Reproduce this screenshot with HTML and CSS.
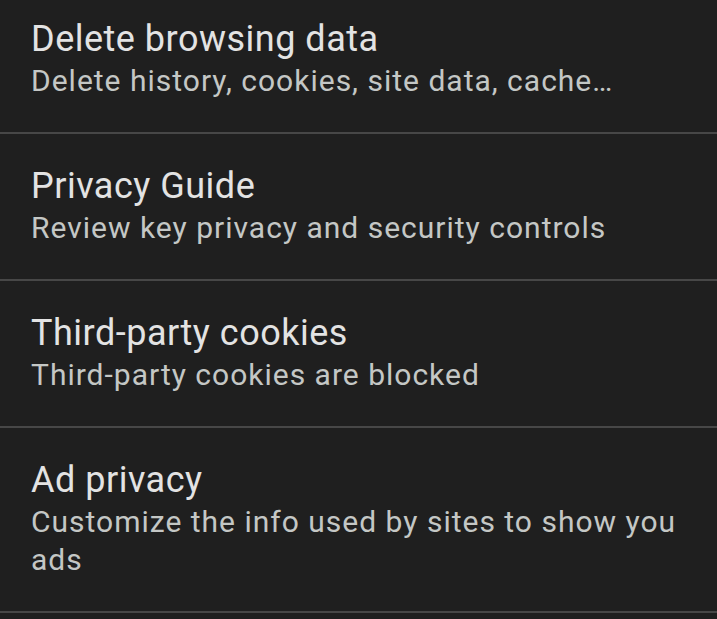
FILE: index.html
```html
<!DOCTYPE html>
<html lang="en">
<head>
    <meta charset="UTF-8">
    <title>Privacy and security</title>
    <link rel="stylesheet" href="styles.css">
</head>
<body>
    <ul class="prefs">
        <li class="pref">
            <div class="pref-title">Delete browsing data</div>
            <div class="pref-summary">Delete history, cookies, site data, cache…</div>
        </li>
        <li class="pref">
            <div class="pref-title">Privacy Guide</div>
            <div class="pref-summary">Review key privacy and security controls</div>
        </li>
        <li class="pref">
            <div class="pref-title">Third-party cookies</div>
            <div class="pref-summary">Third-party cookies are blocked</div>
        </li>
        <li class="pref">
            <div class="pref-title">Ad privacy</div>
            <div class="pref-summary">Customize the info used by sites to show you ads</div>
        </li>
    </ul>
</body>
</html>
```

FILE: styles.css
```css
* {
    margin: 0;
    padding: 0;
}

html,
body {
    background-color: #1f1f1f;
    height: 100%;
    overflow: hidden;
}

body {
    font-family: Roboto, "Noto Sans", sans-serif;
}

li {
    list-style: none;
}

/* list is scrolled a little, the first row is cut at the top */
.prefs {
    margin-top: -13px;
}

.pref {
    padding: 29px 30px 32px 31px;
    border-bottom: 2px solid #474747;
}

.pref-title {
    font-size: 36px;
    line-height: 46px;
    letter-spacing: 0.5px;
    color: #e3e3e3;
}

.pref-summary {
    font-size: 30px;
    line-height: 38px;
    letter-spacing: 1px;
    color: #c4c7c5;
}
```
